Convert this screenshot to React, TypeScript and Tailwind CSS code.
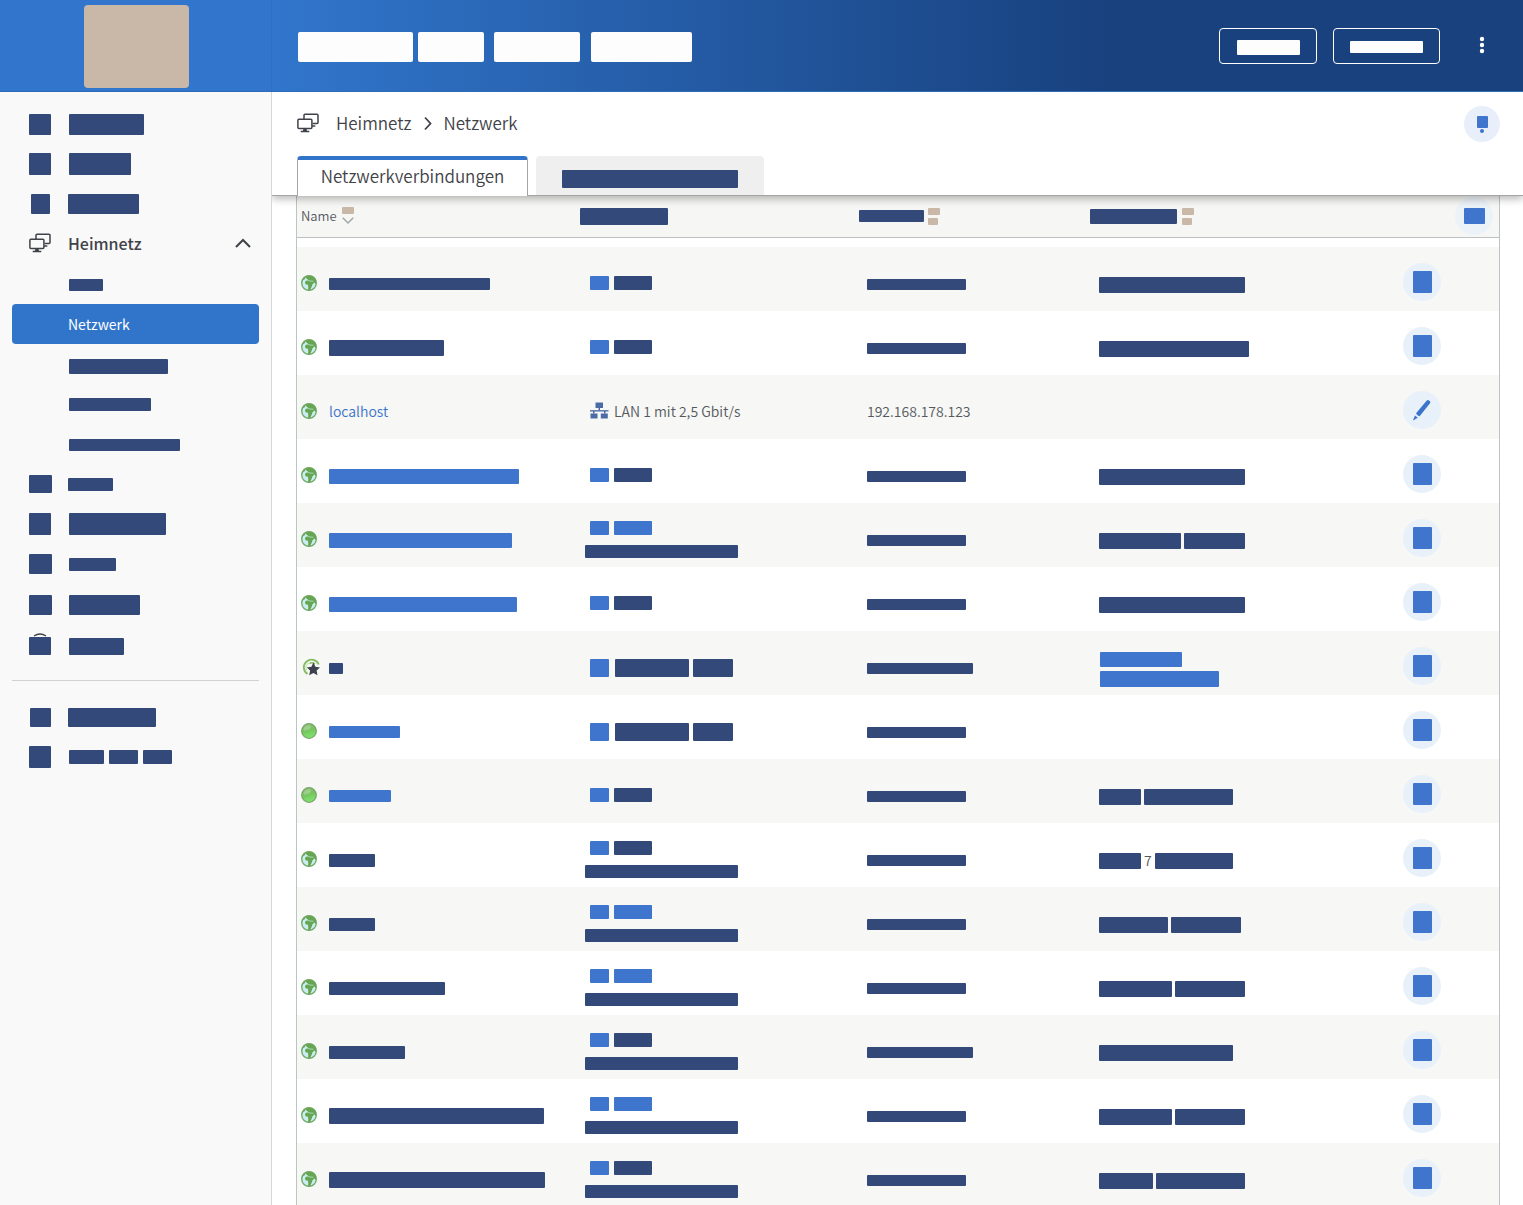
import type { ReactNode } from 'react';

const NAVY = 'bg-[#33497a]';
const BLUE = 'bg-[#4075ce]';
const SAND = 'bg-[#c9b8a8]';

function Bar({ tone = NAVY, size }: { tone?: string; size: string }) {
  return <span className={`block shrink-0 rounded-[1px] ${tone} ${size}`} />;
}

function ScreensIcon() {
  return (
    <svg width="22" height="20" viewBox="0 0 22 20" fill="none" stroke="#3f4248" strokeWidth="1.5" className="block shrink-0" aria-hidden="true">
      <path d="M7 6V2.200q0-1 1-1H20q1 0 1 1V9.500q0 1-1 1H15.500M15 13H18.300" />
      <rect x="0.900" y="6.200" width="14" height="9.300" rx="1" />
      <path d="M3.700 18.500h8.600" />
      <path d="M6.500 15.500h3L10.200 18.500H5.800Z" fill="#3f4248" stroke="none" />
    </svg>
  );
}

function Chevron({ d, size = 'w-4 h-4', stroke = '#3f4248', width = 2 }: { d: string; size?: string; stroke?: string; width?: number }) {
  return (
    <svg viewBox="0 0 16 16" className={`block shrink-0 ${size}`} fill="none" stroke={stroke} strokeWidth={width} aria-hidden="true">
      <path d={d} />
    </svg>
  );
}

function Globe() {
  return (
    <svg width="16" height="16" viewBox="0 0 16 16" className="block" aria-hidden="true">
      <circle cx="8" cy="8" r="7.300" fill="#c9edf0" stroke="#74a866" strokeWidth="1.400" />
      <path d="M5 1.300 8 .6 11.500 1.300 14.300 3.800 15.300 7.500 14.600 8.800 13.200 7.600 12.300 8.400 11.300 9.800 10.800 11.600 9.800 13.400 9.400 15.300 7 15.300 7.300 12.500 6.900 9.700 4.800 9.300 3.900 8 4.500 6.300 6 5.500 7.200 4.600 5.200 3.600Z" fill="#66a552" />
      <path d="M6.300 5.400 9 6 12.500 6.300" stroke="#b6dfd0" strokeWidth=".8" fill="none" />
      <path d="M1.300 5.500Q2.200 2.800 5 1.600L3.700 4.200Z" fill="#66a552" />
    </svg>
  );
}

function Dot() {
  return (
    <svg width="16" height="16" viewBox="0 0 16 16" className="block" aria-hidden="true">
      <defs>
        <linearGradient id="dot" x1="0" y1="0" x2="0.3" y2="1">
          <stop offset="0" stopColor="#93bd80" />
          <stop offset=".5" stopColor="#72c45a" />
          <stop offset="1" stopColor="#7fe070" />
        </linearGradient>
      </defs>
      <circle cx="8" cy="8" r="7.300" fill="url(#dot)" stroke="#7aa56a" strokeWidth="1.300" />
      <path d="M2.500 7.500Q2.500 3 7.500 2.200 11 2.500 9.500 5.500 7.500 7.500 2.500 7.500Z" fill="#b4d6a5" opacity=".6" />
    </svg>
  );
}

function MeshStar() {
  return (
    <svg width="18" height="18" viewBox="0 0 18 18" className="ml-px block" aria-hidden="true">
      <path d="M5.500 15.900A7.700 7.700 0 1 1 16.700 6.500" fill="none" stroke="#83bd63" strokeWidth="1.900" />
      <path d="M4.600 12.500A5.200 5.200 0 0 1 7 5" fill="none" stroke="#c4e0b2" strokeWidth="1.200" />
      <path d="M7.500 5.400Q10.500 3.800 13 6" fill="none" stroke="#83bd63" strokeWidth="1.600" />
      <path d="m11.400 4.600 2 4.200 4.600.6-3.400 3.200.9 4.700-4.100-2.300-4.200 2.300.9-4.700L4.800 9.400l4.600-.6Z" fill="#3b414d" />
    </svg>
  );
}

function LanIcon() {
  return (
    <svg width="19" height="18" viewBox="0 0 19 18" className="block shrink-0" fill="#4c6ba6" aria-hidden="true">
      <path d="M5.500.500h7.500v5.500H5.500z" />
      <path d="M.500 11.500h7v5h-7zM10.800 11.500h7v5h-7z" />
      <path d="M8.500 6h1.500v2.500H8.500zM3 9h1.500v2.500H3zM14 9h1.500v2.500H14z" />
      <path d="M0 8h18.500v1.600H0z" opacity=".85" />
    </svg>
  );
}

function Pencil() {
  return (
    <svg width="20" height="22" viewBox="0 0 20 22" fill="#3b74ca" aria-hidden="true">
      <path d="M14.800 1.600q1-1.200 2.200-.2l.9.800q1 1 .1 2.100L8 16.800q-.6.800-1.400.1L4.500 15.200q-.7-.6 0-1.400Z" />
      <path d="m3 16.500 2.800 2.200-4.300 2.600q-.5.100-.4-.4Z" />
    </svg>
  );
}

type NavEntry = { icon?: string; cap?: boolean; bars: string[] };

function NavRow({ entry }: { entry: NavEntry }) {
  return (
    <li>
      <a href="#" aria-label="Menüpunkt" className="flex h-10 items-center pl-[17px]">
        <span className="flex w-10 flex-col">
          {entry.cap && (
            <svg width="22" height="4" viewBox="0 0 22 4" fill="none" stroke="#3f4248" strokeWidth="1.300" aria-hidden="true">
              <path d="M5 3Q11-1 17 3" />
            </svg>
          )}
          {entry.icon && <Bar size={entry.icon} />}
        </span>
        <span className="flex gap-[5px]">
          {entry.bars.map((b, i) => (
            <Bar key={i} size={b} />
          ))}
        </span>
      </a>
    </li>
  );
}

const topNav: NavEntry[] = [
  { icon: 'w-[22px] h-[21px]', bars: ['w-[75px] h-[21px]'] },
  { icon: 'w-[22px] h-[22px]', bars: ['w-[62px] h-[22px]'] },
  { icon: 'w-[19px] h-5 ml-0.5', bars: ['w-[71px] h-5 -ml-px'] },
];
const subNav: NavEntry[] = [
  { bars: ['w-[99px] h-[15px] mt-1'] },
  { bars: ['w-[82px] h-[13px]'] },
  { bars: ['w-[111px] h-3 mt-0.5'] },
];
const midNav: NavEntry[] = [
  { icon: 'w-[23px] h-[18px]', bars: ['w-[45px] h-[13px] -ml-px'] },
  { icon: 'w-[22px] h-[22px]', bars: ['w-[97px] h-[22px]'] },
  { icon: 'w-[23px] h-5', bars: ['w-[47px] h-[13px]'] },
  { icon: 'w-[23px] h-5 mt-0.5', bars: ['w-[71px] h-5 mt-0.5'] },
  { icon: 'w-[22px] h-[18px]', cap: true, bars: ['w-[55px] h-[17px] mt-1'] },
];
const bottomNav: NavEntry[] = [
  { icon: 'w-[21px] h-[19px] ml-px', bars: ['w-[88px] h-[19px] -ml-px'] },
  { icon: 'w-[22px] h-[22px]', bars: ['w-[35px] h-3.5', 'w-[29px] h-3.5', 'w-[29px] h-3.5'] },
];

type Row = {
  icon?: 'dot' | 'star';
  name: ReactNode;
  link: 'short' | 'shortBlue' | 'wide' | 'lan';
  detail?: boolean;
  ip: ReactNode;
  props?: ReactNode;
  edit?: boolean;
};

const IP = <Bar size="w-[99px] h-[11px] mt-0.5" />;
const IP_LONG = <Bar size="w-[106px] h-[11px] mt-0.5" />;
const name = (size: string, tone = NAVY) => (
  <span className="block pt-0.5">
    <Bar tone={tone} size={size} />
  </span>
);
const pair = (a: string, b?: string, mid?: string) => (
  <span className="flex items-center gap-[3px]">
    <Bar size={a} />
    {mid && <span className="-my-1 pb-0.5">{mid}</span>}
    {b && <Bar size={b} />}
  </span>
);

const rows: Row[] = [
  { name: name('w-[161px] h-3'), link: 'short', ip: IP, props: pair('w-[146px] h-4') },
  { name: name('w-[115px] h-4'), link: 'short', ip: IP, props: pair('w-[150px] h-4') },
  {
    name: <a href="#" className="text-[#3b74ca]">localhost</a>,
    link: 'lan',
    ip: <span>192.168.178.123</span>,
    edit: true,
  },
  { name: name('w-[190px] h-[15px]', BLUE), link: 'short', ip: IP, props: pair('w-[146px] h-4') },
  { name: name('w-[183px] h-[15px]', BLUE), link: 'shortBlue', detail: true, ip: IP, props: pair('w-[82px] h-4', 'w-[61px] h-4') },
  { name: name('w-[188px] h-[15px]', BLUE), link: 'short', ip: IP, props: pair('w-[146px] h-4') },
  {
    icon: 'star',
    name: name('w-3.5 h-[11px]'),
    link: 'wide',
    ip: IP_LONG,
    props: (
      <span className="flex flex-col gap-1 pl-px">
        <Bar tone={BLUE} size="w-[82px] h-[15px]" />
        <Bar tone={BLUE} size="w-[119px] h-4" />
      </span>
    ),
  },
  { icon: 'dot', name: name('w-[71px] h-3', BLUE), link: 'wide', ip: IP },
  { icon: 'dot', name: name('w-[62px] h-3', BLUE), link: 'short', ip: IP, props: pair('w-[42px] h-4', 'w-[89px] h-4') },
  { name: name('w-[46px] h-[13px]'), link: 'short', detail: true, ip: IP, props: pair('w-[42px] h-4', 'w-[78px] h-4', '7') },
  { name: name('w-[46px] h-[13px]'), link: 'shortBlue', detail: true, ip: IP, props: pair('w-[69px] h-4', 'w-[70px] h-4') },
  { name: name('w-[116px] h-[13px]'), link: 'shortBlue', detail: true, ip: IP, props: pair('w-[73px] h-4', 'w-[70px] h-4') },
  { name: name('w-[76px] h-[13px]'), link: 'short', detail: true, ip: IP_LONG, props: pair('w-[134px] h-4') },
  { name: name('w-[215px] h-4'), link: 'shortBlue', detail: true, ip: IP, props: pair('w-[73px] h-4', 'w-[70px] h-4') },
  { name: name('w-[216px] h-4'), link: 'short', detail: true, ip: IP, props: pair('w-[54px] h-4', 'w-[89px] h-4') },
];

function Connection({ row }: { row: Row }) {
  if (row.link === 'lan') {
    return (
      <span className="flex items-center gap-[5px] pl-[5px]">
        <LanIcon />
        <span>LAN 1 mit 2,5 Gbit/s</span>
      </span>
    );
  }
  if (row.link === 'wide') {
    return (
      <span className="flex gap-1 pt-0.5 pl-[5px]">
        <Bar tone={BLUE} size="w-[19px] h-[18px] mr-0.5" />
        <Bar size="w-[74px] h-[18px]" />
        <Bar size="w-10 h-[18px]" />
      </span>
    );
  }
  return (
    <span className="flex flex-col gap-2.5">
      <span className="flex gap-[5px] pl-[5px]">
        <Bar tone={BLUE} size="w-[19px] h-3.5" />
        <Bar tone={row.link === 'short' ? NAVY : BLUE} size="w-[38px] h-3.5" />
      </span>
      {row.detail && <Bar size="w-[153px] h-[13px]" />}
    </span>
  );
}

function SortMark() {
  return (
    <span className="flex flex-col gap-[3px]">
      <Bar tone={SAND} size="w-3 h-[7px]" />
      <Bar tone={SAND} size="w-2.5 h-[7px]" />
    </span>
  );
}

export default function App() {
  return (
    <div className="flex h-screen flex-col overflow-hidden bg-white font-['Noto_Sans_CJK_SC',sans-serif] font-[350] text-[#3f4248]">
      <header className="flex h-[92px] shrink-0 border-b border-[#2f6cb5] bg-linear-to-r from-[#3176cc] from-18% to-[#18417e] to-73%">
        <div className="flex w-[272px] shrink-0 justify-center border-r border-[#2e70c4] pt-[5px] pl-0.5">
          <div className={`h-[83px] w-[105px] rounded-[4px] ${SAND}`} />
        </div>
        <div className="flex flex-1 items-center pr-[29px] pl-[26px]">
          <nav className="flex pt-0.5" aria-label="Hauptnavigation">
            <a href="#" aria-label="Link 1" className="mr-[5px] h-[30px] w-[115px] rounded-[2px] bg-[#fdfdfd]" />
            <a href="#" aria-label="Link 2" className="mr-2.5 h-[30px] w-[66px] rounded-[2px] bg-[#fdfdfd]" />
            <a href="#" aria-label="Link 3" className="mr-[11px] h-[30px] w-[86px] rounded-[2px] bg-[#fdfdfd]" />
            <a href="#" aria-label="Link 4" className="h-[30px] w-[101px] rounded-[2px] bg-[#fdfdfd]" />
          </nav>
          <div className="ml-auto flex items-center gap-4">
            <button type="button" aria-label="Aktion 1" className="flex h-9 w-[98px] items-center justify-center rounded-[4px] border border-white pt-1">
              <Bar tone="bg-[#fdfdfd]" size="w-[63px] h-[15px]" />
            </button>
            <button type="button" aria-label="Aktion 2" className="flex h-9 w-[107px] items-center justify-center rounded-[4px] border border-white pt-0.5">
              <Bar tone="bg-[#fdfdfd]" size="w-[73px] h-3" />
            </button>
            <button type="button" aria-label="Mehr" className="ml-3.5 flex h-9 w-6 items-center justify-center pb-0.5">
              <svg width="6" height="18" viewBox="0 0 6 18" fill="#fff" aria-hidden="true">
                <circle cx="3" cy="3" r="2.200" />
                <circle cx="3" cy="9" r="2.200" />
                <circle cx="3" cy="15" r="2.200" />
              </svg>
            </button>
          </div>
        </div>
      </header>

      <div className="flex min-h-0 flex-1">
        <aside className="w-[272px] shrink-0 border-r border-[#d5d7d9] bg-[#f9f9f9] px-3 pt-3">
          <nav aria-label="Menü">
            <ul>
              {topNav.map((e, i) => (
                <NavRow key={i} entry={e} />
              ))}
              <li>
                <button type="button" aria-expanded="true" className="flex h-10 w-full items-center pr-2 pb-0.5 pl-[17px]">
                  <ScreensIcon />
                  <span className="ml-[17px] text-[16px] leading-6 font-medium">Heimnetz</span>
                  <span className="ml-auto">
                    <Chevron d="M1 12 8 5 15 12" />
                  </span>
                </button>
              </li>
              <NavRow entry={{ bars: ['w-[34px] h-3 mt-0.5'] }} />
              <li>
                <a href="#" aria-current="page" className="flex h-10 items-center rounded-[4px] bg-[#3175cb] pl-14 text-[14px] leading-5 font-normal text-white">
                  Netzwerk
                </a>
              </li>
              {subNav.map((e, i) => (
                <NavRow key={i} entry={e} />
              ))}
              {midNav.map((e, i) => (
                <NavRow key={i} entry={e} />
              ))}
            </ul>
            <hr className="my-4 border-[#d0d1d2]" />
            <ul>
              {bottomNav.map((e, i) => (
                <NavRow key={i} entry={e} />
              ))}
            </ul>
          </nav>
        </aside>

        <main className="flex min-w-0 flex-1 flex-col overflow-hidden">
          <div className="relative z-10 shrink-0 bg-white shadow-[0_3px_8px_rgba(0,0,0,0.28)]">
            <div className="flex h-16 items-center pr-[23px] pl-[25px]">
              <div className="flex items-center pb-0.5">
                <ScreensIcon />
                <nav aria-label="Brotkrumen" className="ml-[17px] flex items-center text-[17px] leading-6">
                  <a href="#">Heimnetz</a>
                  <span className="mx-2">
                    <Chevron d="M5 2.500 10.500 8.500 5 14.500" width={1.8} />
                  </span>
                  <a href="#">Netzwerk</a>
                </nav>
              </div>
              <button type="button" aria-label="Hilfe" className="ml-auto flex h-9 w-9 flex-col items-center justify-center gap-px rounded-full bg-[#e8effa]">
                <Bar tone={BLUE} size="w-[11px] h-3" />
                <span className="h-1 w-1 rounded-full bg-[#3b74ca]" />
              </button>
            </div>
            <div role="tablist" className="flex items-end border-b border-[#a3a5a7] pl-[25px]">
              <button type="button" role="tab" aria-selected="true" className="-mb-px h-10 w-[231px] rounded-t-[4px] border-x border-t-4 border-x-[#a3a5a7] border-t-[#3175cb] bg-white pb-1 text-[17px] leading-6">
                Netzwerkverbindungen
              </button>
              <button type="button" role="tab" aria-selected="false" aria-label="Weiterer Tab" className="ml-2 flex h-[39px] w-[228px] items-center justify-center rounded-t-[4px] bg-[#efefef] pt-1.5">
                <Bar size="w-[176px] h-[18px]" />
              </button>
            </div>
          </div>

          <div className="min-h-0 flex-1 overflow-y-auto pr-[23px] pl-6 [scrollbar-width:none]">
            <div className="border-x border-[#bcc5c6]">
              <table className="w-full table-fixed border-collapse text-[14px] leading-5 text-[#55595d]">
                <colgroup>
                  <col className="w-[283px]" />
                  <col className="w-[277px]" />
                  <col className="w-[232px]" />
                  <col />
                  <col className="w-[106px]" />
                </colgroup>
                <thead>
                  <tr className="h-[41px] border-b border-[#bcc0c0] bg-[#f6f6f4] text-left">
                    <th scope="col" className="p-0 pl-1 font-[350]">
                      <span className="flex items-center gap-[5px] text-[13px]">
                        Name
                        <span className="flex flex-col">
                          <Bar tone={SAND} size="w-3 h-[7px]" />
                          <Chevron d="M1 5 8 12 15 5" size="w-3 h-3" stroke="#a3a5a7" width={2} />
                        </span>
                      </span>
                    </th>
                    <th scope="col" aria-label="Verbindung" className="p-0">
                      <Bar size="w-[88px] h-[17px]" />
                    </th>
                    <th scope="col" aria-label="Adresse" className="p-0 pl-0.5">
                      <span className="flex items-center gap-1">
                        <Bar size="w-[65px] h-3" />
                        <SortMark />
                      </span>
                    </th>
                    <th scope="col" aria-label="Eigenschaften" className="p-0 pl-px">
                      <span className="flex items-center gap-[5px]">
                        <Bar size="w-[87px] h-[15px]" />
                        <SortMark />
                      </span>
                    </th>
                    <th scope="col" aria-label="Aktionen" className="p-0 pr-1.5">
                      <button type="button" aria-label="Spalten" className="ml-auto flex h-[38px] w-[38px] items-center justify-center rounded-full bg-[#ebf2f8]">
                        <Bar tone={BLUE} size="w-[21px] h-4" />
                      </button>
                    </th>
                  </tr>
                </thead>
                <tbody>
                  <tr aria-hidden="true" className="h-[10px]">
                    <td colSpan={5} className="p-0" />
                  </tr>
                  {rows.map((row, i) => (
                    <tr key={i} className={`h-16 ${i % 2 === 0 ? 'bg-[#f7f7f5]' : 'bg-white'}`}>
                      <td className="p-0 pt-2 pl-1">
                        <span className="flex items-center">
                          <span className="w-7 shrink-0">
                            {row.icon === 'dot' ? <Dot /> : row.icon === 'star' ? <MeshStar /> : <Globe />}
                          </span>
                          {row.name}
                        </span>
                      </td>
                      <td className="p-0 pt-2 pl-[5px]">
                        <Connection row={row} />
                      </td>
                      <td className="p-0 pt-2 pl-2.5">{row.ip}</td>
                      <td className="p-0 pt-3 pl-2.5">{row.props}</td>
                      <td className="p-0 pt-1.5 pl-2.5">
                        <button type="button" aria-label="Bearbeiten" className="flex h-[38px] w-[38px] items-center justify-center rounded-full bg-[#e8f1fa]">
                          {row.edit ? <Pencil /> : <Bar tone={BLUE} size="w-[19px] h-[22px]" />}
                        </button>
                      </td>
                    </tr>
                  ))}
                </tbody>
              </table>
            </div>
          </div>
        </main>
      </div>
    </div>
  );
}
